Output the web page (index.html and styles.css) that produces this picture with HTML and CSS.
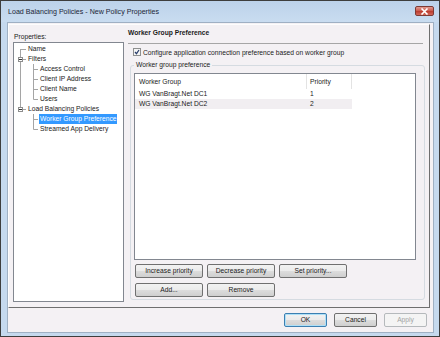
FILE: index.html
```html
<!DOCTYPE html>
<html>
<head>
<title>Load Balancing Policies - New Policy Properties</title>
<link rel="stylesheet" href="styles.css">
</head>
<body>
<div class="window">
  <div class="titlebar">
    <span class="title">Load Balancing Policies - New Policy Properties</span>
    <span class="close"><svg width="9" height="7" viewBox="0 0 9 7"><path d="M1.5 0.5l6 6M7.5 0.5l-6 6" stroke="#fff" stroke-width="1.6"/></svg></span>
  </div>
  <div class="client">
    <div class="panel">
      <div class="left">
        <div class="caption">Properties:</div>
        <div class="tree">
          <div class="node"><svg class="guide" width="13" height="10"><path d="M6.5 5V10M6.5 5.5H12"/></svg><span class="label">Name</span></div>
          <div class="node"><svg class="guide" width="13" height="10"><path d="M6.5 0V3M6.5 8V10M9 5.5H12"/><rect class="box" x="4.5" y="3.5" width="4" height="4"/><path class="minus" d="M5 5.5H8"/></svg><span class="label">Filters</span></div>
          <div class="node"><svg class="guide" width="25" height="10"><path d="M6.5 0V10M19.5 0V10M19.5 5.5H24"/></svg><span class="label">Access Control</span></div>
          <div class="node"><svg class="guide" width="25" height="10"><path d="M6.5 0V10M19.5 0V10M19.5 5.5H24"/></svg><span class="label">Client IP Address</span></div>
          <div class="node"><svg class="guide" width="25" height="10"><path d="M6.5 0V10M19.5 0V10M19.5 5.5H24"/></svg><span class="label">Client Name</span></div>
          <div class="node"><svg class="guide" width="25" height="10"><path d="M6.5 0V10M19.5 0V5.5M19.5 5.5H24"/></svg><span class="label">Users</span></div>
          <div class="node"><svg class="guide" width="13" height="10"><path d="M6.5 0V3M9 5.5H12"/><rect class="box" x="4.5" y="3.5" width="4" height="4"/><path class="minus" d="M5 5.5H8"/></svg><span class="label">Load Balancing Policies</span></div>
          <div class="node"><svg class="guide" width="25" height="10"><path d="M19.5 0V10M19.5 5.5H24"/></svg><span class="label selected">Worker Group Preference</span></div>
          <div class="node"><svg class="guide" width="25" height="10"><path d="M19.5 0V5.5M19.5 5.5H24"/></svg><span class="label">Streamed App Delivery</span></div>
        </div>
      </div>
      <div class="right">
        <div class="heading">Worker Group Preference</div>
        <div class="rule"></div>
        <div class="check-row">
          <svg class="checkbox" width="8" height="8" viewBox="0 0 8 8"><rect x="0.5" y="0.5" width="7" height="7" fill="#f4f4f4" stroke="#8e8f8f"/><path d="M2 4l1.5 1.7L6 2" fill="none" stroke="#2a3d6b" stroke-width="1.2"/></svg>
          <span>Configure application connection preference based on worker group</span>
        </div>
        <fieldset class="group">
          <legend>Worker group preference</legend>
          <div class="listview">
            <div class="lv-head">
              <div class="col-name">Worker Group</div>
              <div class="col-prio">Priority</div>
            </div>
            <div class="lv-row">
              <div class="col-name">WG VanBragt.Net DC1</div>
              <div class="col-prio">1</div>
            </div>
            <div class="lv-row lv-hot">
              <div class="col-name">WG VanBragt.Net DC2</div>
              <div class="col-prio">2</div>
            </div>
          </div>
          <div class="btn-row">
            <button class="btn">Increase priority</button>
            <button class="btn">Decrease priority</button>
            <button class="btn">Set priority...</button>
          </div>
          <div class="btn-row second">
            <button class="btn">Add...</button>
            <button class="btn">Remove</button>
          </div>
        </fieldset>
      </div>
    </div>
    <div class="footer">
      <button class="btn small default">OK</button>
      <button class="btn small">Cancel</button>
      <button class="btn small disabled">Apply</button>
    </div>
  </div>
</div>
</body>
</html>
```
FILE: styles.css
```css
/* Vista style property dialog */

body
{ margin: 0;
background: #ffffff;
font-family: "Liberation Sans", Arial, sans-serif;
font-size: 6.7px;
color: #1a1a1a;
}

div.window
{ width: 440px;
height: 337px;
box-sizing: border-box;
border: 1px solid #3d3d3d;
background: #c5d9ee;
padding: 0 5px 3px 6px;
display: flex;
flex-direction: column;
}

/* Title bar */

div.titlebar
{ height: 21px;
margin: 0 -5px 0 -6px;
padding-left: 7px;
background: linear-gradient(#bcd2ea, #c9dcf0);
display: flex;
align-items: flex-start;
}

span.title
{ flex: 1;
margin-top: 6px;
font-size: 7.1px;
line-height: 10px;
color: #1b2636;
}

span.close
{ width: 19px;
height: 10px;
margin: 5px 5px 0 0;
box-sizing: border-box;
border: 1px solid #7d3a34;
border-radius: 2px;
background: linear-gradient(#e19a8f, #c9574a 50%, #b8382b 50%, #d3685a);
display: flex;
align-items: center;
justify-content: center;
}

/* Client area */

div.client
{ flex: 1;
background: #f4f1f4;
border: 1px solid #9fb0c3;
display: flex;
flex-direction: column;
}

div.panel
{ width: 422px;
height: 284px;
margin-top: 1px;
box-sizing: border-box;
border: 1px solid #fdfdfd;
border-right-color: #6f6f6f;
border-bottom-color: #6f6f6f;
padding-left: 4px;
display: flex;
}

div.left
{ width: 111px;
padding: 7px 0 5px 0;
display: flex;
flex-direction: column;
}

div.caption
{ line-height: 10px;
padding-left: 1px;
}

/* Tree */

div.tree
{ flex: 1;
background: #ffffff;
border: 1px solid #828790;
padding-top: 1px;
}

div.node
{ height: 10px;
display: flex;
align-items: center;
}

svg.guide
{ flex: none;
stroke: #a5a5a5;
fill: none;
}

svg.guide rect.box
{ fill: #ffffff;
stroke: #8e8e8e;
}

svg.guide path.minus
{ stroke: #333333;
}

span.label
{ padding: 0 1px;
line-height: 10px;
white-space: nowrap;
}

span.selected
{ background: #3399ff;
color: #ffffff;
}

/* Right page */

div.right
{ width: 297px;
margin-left: 4px;
padding-top: 3px;
}

div.heading
{ font-weight: bold;
line-height: 10px;
}

div.rule
{ margin: 5px 2px 0 0;
border-top: 1px solid #a6a6a6;
}

div.check-row
{ margin-top: 3px;
height: 10px;
padding-left: 5px;
display: flex;
align-items: center;
gap: 2px;
}

svg.checkbox
{ flex: none;
}

fieldset.group
{ margin: 3px 0 0 2px;
padding: 3px 3px 2px 3px;
border: 1px solid #d5dbe1;
border-radius: 3px;
}

fieldset.group legend
{ padding: 0 2px;
line-height: 10px;
}

/* List view */

div.listview
{ width: 282px;
height: 187px;
box-sizing: border-box;
border: 1px solid #828790;
background: #ffffff;
}

div.lv-head, div.lv-row
{ display: flex;
}

div.lv-head
{ height: 15px;
align-items: center;
}

div.lv-head div
{ line-height: 15px;
border-right: 1px solid #e3e3e3;
}

div.lv-row
{ width: 217px;
height: 10px;
line-height: 10px;
}

div.lv-hot
{ background: #f1eef1;
}

div.col-name
{ width: 172px;
box-sizing: border-box;
padding-left: 4px;
}

div.col-prio
{ width: 45px;
box-sizing: border-box;
padding-left: 3px;
}

div.lv-head div.col-prio
{ padding-left: 3px;
}

/* Buttons */

div.btn-row
{ margin: 4px 0 0 1px;
display: flex;
gap: 4px;
}

div.btn-row.second
{ margin-top: 5px;
}

button.btn
{ width: 68px;
height: 14px;
padding: 0;
box-sizing: border-box;
border: 1px solid #707070;
border-radius: 2px;
background: linear-gradient(#f2f2f2, #ebebeb 50%, #dddddd 50%, #cfcfcf);
font-family: inherit;
font-size: 6.7px;
line-height: 12px;
color: #1a1a1a;
}

button.small
{ width: 43px;
}

button.default
{ border-color: #3c7fb1;
box-shadow: inset 0 0 0 1px #aee0f7;
}

button.disabled
{ border-color: #b5b9bc;
background: #f4f4f4;
color: #a3a3a3;
}

div.footer
{ flex: 1;
padding: 5px 6px 0 0;
display: flex;
justify-content: flex-end;
align-items: flex-start;
gap: 7px;
}
```
